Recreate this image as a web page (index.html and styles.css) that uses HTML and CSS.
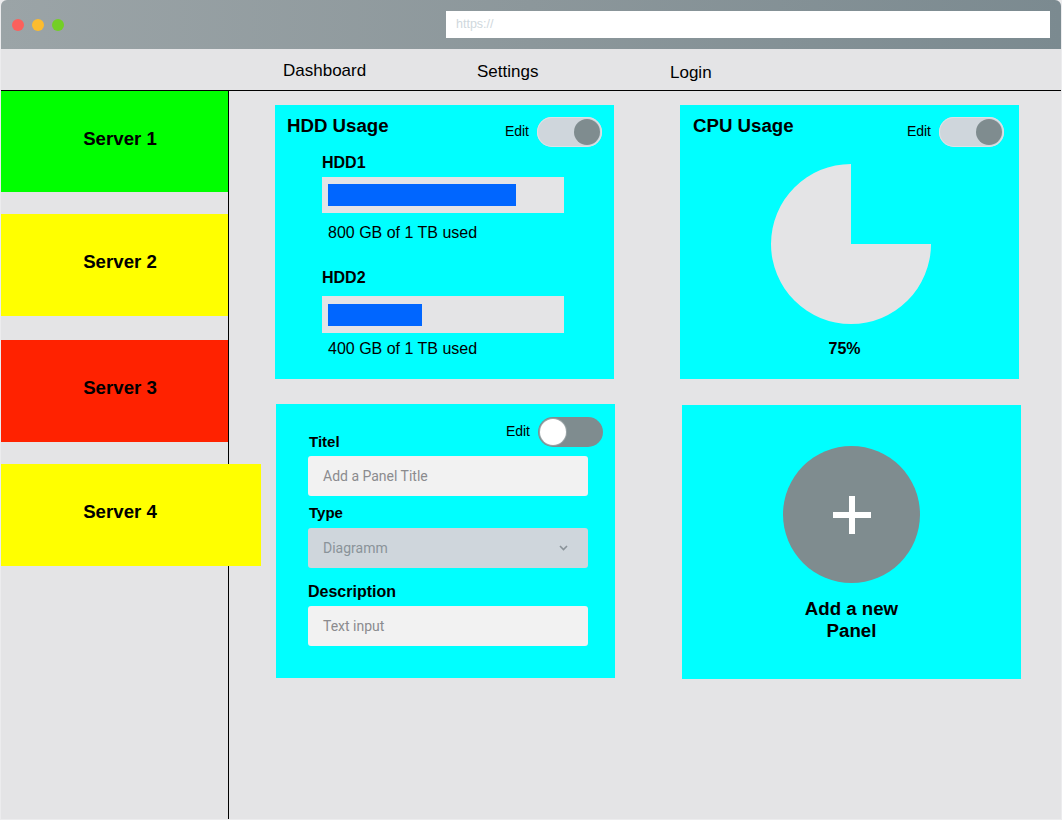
FILE: index.html
```html
<!DOCTYPE html>
<html lang="en">
<head>
<meta charset="utf-8">
<title>Server Dashboard</title>
<link rel="stylesheet" href="styles.css">
</head>
<body>
<div class="window">
  <header class="chrome">
    <div class="lights">
      <span class="light light--red"></span>
      <span class="light light--yellow"></span>
      <span class="light light--green"></span>
    </div>
    <div class="url">https://</div>
  </header>

  <nav class="nav">
    <a class="nav-link nav-link--1">Dashboard</a>
    <a class="nav-link nav-link--2">Settings</a>
    <a class="nav-link nav-link--3">Login</a>
  </nav>

  <div class="layout">
    <aside class="sidebar">
      <div class="server server--green"><span class="server-name">Server 1</span></div>
      <div class="server server--yellow server--gap"><span class="server-name">Server 2</span></div>
      <div class="server server--red server--gap-lg"><span class="server-name">Server 3</span></div>
      <div class="server server--yellow server--gap server--wide"><span class="server-name">Server 4</span></div>
    </aside>

    <main class="grid">
      <section class="card">
        <div class="card-head">
          <h2 class="card-title">HDD Usage</h2>
          <div class="edit">
            <span class="edit-label">Edit</span>
            <span class="toggle toggle--on"><span class="knob"></span></span>
          </div>
        </div>
        <div class="hdd">
          <h3 class="hdd-name">HDD1</h3>
          <div class="bar"><div class="bar-fill" style="width:188px"></div></div>
          <p class="hdd-text">800 GB of 1 TB used</p>
        </div>
        <div class="hdd hdd--second">
          <h3 class="hdd-name">HDD2</h3>
          <div class="bar"><div class="bar-fill" style="width:94px"></div></div>
          <p class="hdd-text">400 GB of 1 TB used</p>
        </div>
      </section>

      <section class="card">
        <div class="card-head card-head--cpu">
          <h2 class="card-title">CPU Usage</h2>
          <div class="edit">
            <span class="edit-label">Edit</span>
            <span class="toggle toggle--on"><span class="knob"></span></span>
          </div>
        </div>
        <svg class="pie" width="160" height="160" viewBox="0 0 160 160">
          <path d="M80 80 L80 0 A80 80 0 1 0 160 80 Z" fill="#e4e4e6"/>
        </svg>
        <p class="pie-value">75%</p>
      </section>

      <section class="card card--form">
        <div class="form-top">
          <label class="field-label field-label--sm">Titel</label>
          <div class="edit">
            <span class="edit-label">Edit</span>
            <span class="toggle toggle--off"><span class="knob"></span></span>
          </div>
        </div>
        <div class="input">Add a Panel Title</div>
        <label class="field-label field-label--sm field-label--type">Type</label>
        <div class="select">
          <span>Diagramm</span>
          <svg class="chevron" width="9" height="6" viewBox="0 0 9 6"><path d="M1 1 L4.5 4.5 L8 1" fill="none" stroke="#8a9399" stroke-width="1.6"/></svg>
        </div>
        <label class="field-label field-label--desc">Description</label>
        <div class="input input--desc">Text input</div>
      </section>

      <section class="card card--add">
        <div class="add-circle">
          <span class="plus plus--h"></span>
          <span class="plus plus--v"></span>
        </div>
        <p class="add-text">Add a new<br>Panel</p>
      </section>
    </main>
  </div>
</div>
</body>
</html>
```

FILE: styles.css
```css
* { box-sizing: border-box; }

html, body {
  margin: 0;
  padding: 0;
}

body {
  background: #ececee;
  font-family: "Liberation Sans", Arial, sans-serif;
  color: #000;
}

.window {
  width: 1060px;
  height: 819px;
  margin-left: 1px;
  background: #e4e4e6;
  border-radius: 6px 6px 0 0;
  overflow: hidden;
  display: flex;
  flex-direction: column;
}

/* browser chrome */
.chrome {
  height: 49px;
  flex: none;
  display: flex;
  align-items: center;
  justify-content: space-between;
  padding: 0 11px 0 11px;
  background: linear-gradient(90deg, #9ba4a7 0%, #8c979b 50%, #7b8a90 100%);
}

.lights {
  display: flex;
  gap: 8px;
  margin-top: 1px;
}

.light {
  width: 12px;
  height: 12px;
  border-radius: 50%;
}
.light--red { background: #fc605c; }
.light--yellow { background: #fdbc2f; }
.light--green { background: #73cf25; }

.url {
  width: 604px;
  height: 27px;
  background: #fff;
  color: #cfd8dd;
  font-size: 12.5px;
  line-height: 27px;
  padding-left: 10px;
  margin-top: -1px;
}

/* nav */
.nav {
  flex: none;
  height: 42px;
  border-bottom: 1px solid #000;
  display: grid;
  grid-template-columns: 194px 193px auto;
  padding-left: 282px;
  padding-top: 12px;
}

.nav-link {
  font-size: 17px;
  line-height: 20px;
  color: #000;
  text-decoration: none;
}
.nav-link--2 { padding-top: 1px; }
.nav-link--3 { padding-top: 2px; }

/* layout */
.layout {
  flex: 1;
  display: flex;
  min-height: 0;
}

.sidebar {
  width: 228px;
  flex: none;
  border-right: 1px solid #000;
  position: relative;
  z-index: 1;
}

.server {
  width: 227px;
  height: 101px;
  display: flex;
  align-items: center;
  padding-bottom: 6px;
}
.server--gap { margin-top: 22px; height: 102px; }
.server--gap-lg { margin-top: 24px; height: 102px; }
.server--wide { width: 260px; }

.server--green { background: #00ff00; }
.server--yellow { background: #ffff00; }
.server--red { background: #ff2200; }

.server-name {
  flex: none;
  width: 238px;
  text-align: center;
  font-size: 18.67px;
  font-weight: bold;
  line-height: 22px;
}

/* grid of panels */
.grid {
  flex: 1;
  display: grid;
  grid-template-columns: 339px 339px;
  grid-auto-rows: 274px;
  column-gap: 66px;
  row-gap: 25px;
  padding: 14px 0 0 46px;
  align-content: start;
}

.card {
  background: #00ffff;
  display: flex;
  flex-direction: column;
  width: 339px;
  height: 274px;
}

.card-head {
  display: flex;
  justify-content: space-between;
  align-items: flex-start;
  padding: 12px 12px 0 12px;
}
.card-head--cpu { padding: 12px 15px 0 13px; }

.card-title {
  margin: -2px 0 0 0;
  font-size: 18.67px;
  line-height: 22px;
  font-weight: bold;
}

.edit {
  display: flex;
  align-items: center;
  gap: 8px;
}

.edit-label {
  font-size: 14px;
  line-height: 16px;
  margin-top: -3px;
}

.toggle {
  width: 65px;
  height: 30px;
  border-radius: 15px;
  display: flex;
  align-items: center;
  padding: 0 2px;
}
.toggle--on {
  background: #cfd6dc;
  justify-content: flex-end;
  box-shadow: inset 0 0 0 1px #dde2e6;
}
.toggle--off {
  background: #7f8c8f;
  justify-content: flex-start;
}

.knob {
  width: 26px;
  height: 26px;
  border-radius: 50%;
}
.toggle--on .knob { background: #7f8c8f; }
.toggle--off .knob { background: #fff; box-shadow: 0 0 0 1px #9aa4a7; }

/* hdd */
.hdd {
  padding-left: 47px;
  margin-top: 7px;
}
.hdd--second { margin-top: 27px; }

.hdd-name {
  margin: 0;
  font-size: 16px;
  line-height: 18px;
  font-weight: bold;
}

.bar {
  width: 242px;
  height: 36px;
  background: #e4e4e6;
  padding: 7px 6px;
  margin-top: 5px;
}
.hdd--second .bar { margin-top: 9px; padding-top: 8px; height: 37px; }

.bar-fill {
  height: 22px;
  background: #0066ff;
}

.hdd-text {
  margin: 11px 0 0 0;
  padding-left: 6px;
  font-size: 16px;
  line-height: 18px;
}
.hdd--second .hdd-text { margin-top: 7px; }

/* cpu */
.pie {
  display: block;
  margin: 17px 0 0 91px;
}

.pie-value {
  margin: 16px 0 0 0;
  padding-right: 10px;
  text-align: center;
  font-size: 16px;
  line-height: 18px;
  font-weight: bold;
}

/* form */
.card--form {
  margin-left: 1px;
  padding: 13px 12px 0 32px;
}

.form-top {
  display: flex;
  justify-content: space-between;
  align-items: flex-end;
}

.field-label {
  display: block;
  font-weight: bold;
  font-size: 16px;
  line-height: 18px;
}
.field-label--sm {
  font-size: 15px;
  line-height: 17px;
  margin-left: 1px;
  margin-bottom: -3px;
}
.field-label--type {
  margin-top: 8px;
  margin-bottom: 0;
}
.field-label--desc {
  margin-top: 15px;
}

.input,
.select {
  width: 280px;
  height: 40px;
  border-radius: 3px;
  padding: 0 20px 0 15px;
  display: flex;
  align-items: center;
  font-family: Roboto, "Liberation Sans", sans-serif;
  font-size: 14px;
  color: #8b8b8e;
}

.input {
  background: #f2f2f2;
  margin-top: 9px;
}
.input--desc { margin-top: 5px; }

.select {
  background: #cfd6dc;
  color: #8a9399;
  margin-top: 7px;
  justify-content: space-between;
}

.chevron { display: block; }

/* add panel */
.card--add {
  margin: 1px 0 0 2px;
  align-items: center;
  padding-top: 41px;
}

.add-circle {
  width: 137px;
  height: 137px;
  border-radius: 50%;
  background: #7f8c8f;
  display: grid;
  place-items: center;
}

.plus {
  grid-area: 1 / 1;
  background: #fff;
}
.plus--h { width: 38px; height: 6px; }
.plus--v { width: 6px; height: 38px; }

.add-text {
  margin: 15px 0 0 0;
  text-align: center;
  font-size: 18.67px;
  line-height: 22px;
  font-weight: bold;
}
```
